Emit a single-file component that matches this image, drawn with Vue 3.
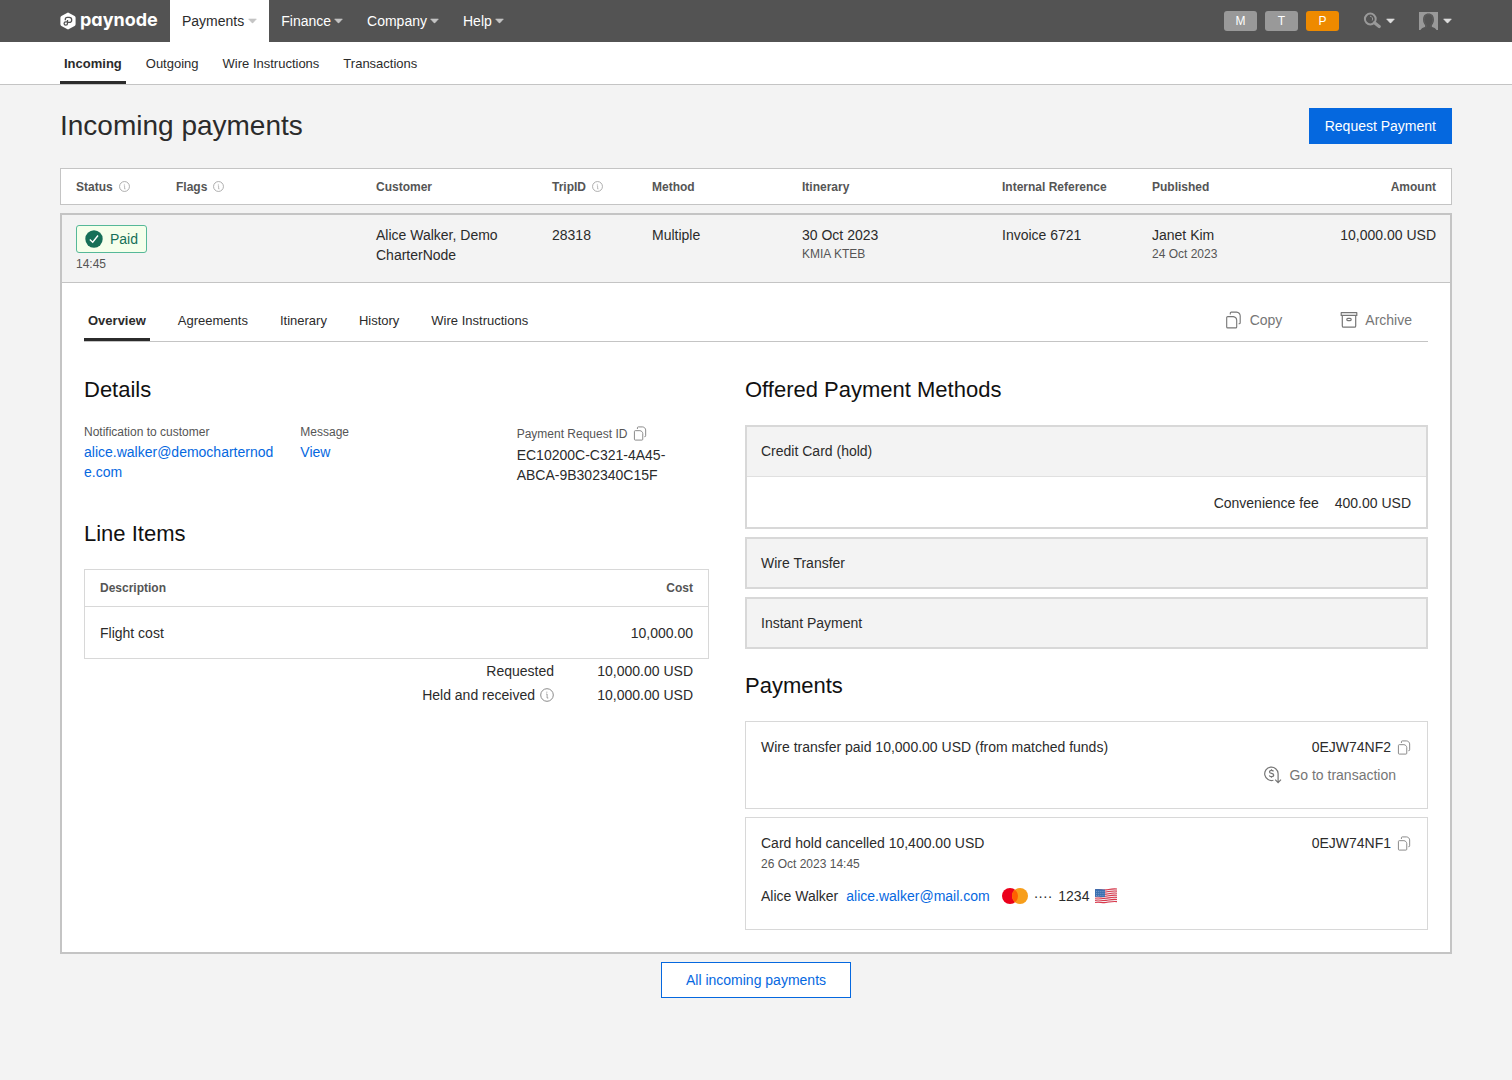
<script setup>
import { h } from 'vue'

const menus = [
  { label: 'Payments', active: true },
  { label: 'Finance' },
  { label: 'Company' },
  { label: 'Help' },
]
const environments = [
  { label: 'M' },
  { label: 'T' },
  { label: 'P', active: true },
]
const sections = ['Incoming', 'Outgoing', 'Wire Instructions', 'Transactions']
const tabs = ['Overview', 'Agreements', 'Itinerary', 'History', 'Wire Instructions']
const columns = [
  { label: 'Status', key: 'status', info: true },
  { label: 'Flags', key: 'flags', info: true },
  { label: 'Customer', key: 'customer' },
  { label: 'TripID', key: 'trip', info: true },
  { label: 'Method', key: 'method' },
  { label: 'Itinerary', key: 'itinerary' },
  { label: 'Internal Reference', key: 'reference' },
  { label: 'Published', key: 'published' },
  { label: 'Amount', key: 'amount' },
]
const methods = [
  { label: 'Credit Card (hold)', fee: '400.00 USD' },
  { label: 'Wire Transfer' },
  { label: 'Instant Payment' },
]
const flagStripes = [0, 1, 2, 3, 4, 5, 6]

const CaretIcon = () =>
  h('svg', { width: 9, height: 6, viewBox: '0 0 9 6', 'aria-hidden': 'true' }, [
    h('path', { d: 'M.6 1h7.8L4.8 4.9h-.6z', fill: 'currentColor', stroke: 'currentColor', 'stroke-width': '.6', 'stroke-linejoin': 'round' }),
  ])

const InfoIcon = (props) =>
  h('svg', { width: props.size, height: props.size, viewBox: '0 0 14 14', fill: 'none', stroke: 'currentColor', 'aria-hidden': 'true' }, [
    h('circle', { cx: 7, cy: 7, r: 6.3, 'stroke-width': '1' }),
    h('path', { d: 'M6.2 6h.9v4M7 10h1.300M6.8 3.7v1', 'stroke-width': '.8' }),
  ])
InfoIcon.props = ['size']

const CopyIcon = (props) =>
  h('svg', { width: props.size, height: props.size, viewBox: '0 0 18 18', fill: 'none', stroke: 'currentColor', 'stroke-width': '1.100', 'stroke-linejoin': 'round', 'aria-hidden': 'true' }, [
    h('path', { d: 'M2.700 5.600h5.600c1.900.2 3.200 1.500 3.400 3.400v6.900a1 1 0 0 1-1 1h-8a1 1 0 0 1-1-1V6.600a1 1 0 0 1 1-1z' }),
    h('path', { d: 'M5.300 3.600V2.100a1 1 0 0 1 1-1h5.200c2 .2 3.500 1.600 3.700 3.600v7.100a1 1 0 0 1-1 1h-.6' }),
  ])
CopyIcon.props = ['size']
</script>

<template>
  <div class="page">
    <header class="topbar">
      <a class="brand" href="#">
        <svg width="16" height="18" viewBox="0 0 16 18" aria-hidden="true">
          <path d="M7 .9a2 2 0 0 1 2 0l5.600 3.200a2 2 0 0 1 1 1.700v6.400a2 2 0 0 1-1 1.700L9 17.100a2 2 0 0 1-2 0l-5.600-3.200a2 2 0 0 1-1-1.700V5.800a2 2 0 0 1 1-1.700z" fill="#fff" />
          <path d="M5.300 8.200V7.400a2 2 0 0 1 2-2h1.900a2.500 2.500 0 0 1 0 5H7.500v1.100a1.700 1.700 0 1 1-1.700-1.700h1.700V8" fill="none" stroke="#535353" stroke-width="1.300" />
        </svg>
        <span class="brand-name">paynode</span>
      </a>
      <nav class="menus" aria-label="Main">
        <button v-for="menu in menus" :key="menu.label" type="button" class="menu" :class="{ active: menu.active }">
          {{ menu.label }}
          <CaretIcon />
        </button>
      </nav>
      <div class="tools">
        <div class="environments">
          <button v-for="env in environments" :key="env.label" type="button" class="environment" :class="{ active: env.active }">{{ env.label }}</button>
        </div>
        <button type="button" class="tool" aria-label="Search">
          <svg width="18" height="18" viewBox="0 0 18 18" fill="none" stroke="#999" aria-hidden="true">
            <circle cx="7.300" cy="7" r="5.400" stroke-width="2" />
            <path d="M11.500 10.800l4.700 3.700" stroke-width="3.200" stroke-linecap="round" />
            <path d="M7 4.200a2.800 2.800 0 0 1 2.200 4.300" stroke-width="1" />
          </svg>
          <CaretIcon />
        </button>
        <button type="button" class="tool" aria-label="Account">
          <svg width="19" height="18" viewBox="0 0 19 18" aria-hidden="true">
            <path d="M0 0h19v18h-1.500c-.7-1.800-2.700-2.200-4.400-3-.6-.4-.4-1.500.1-2.200 1-1.200 1.700-3 1.700-5.300 0-3.700-1.900-6-5.400-6s-5.400 2.300-5.400 6c0 2.300.7 4.100 1.700 5.300.5.700.7 1.800.1 2.200-1.700.8-3.700 1.200-4.400 3H0z" fill="#999" />
            <path d="M9.500 2.500c-2.900 0-4.300 1.900-4.300 5 0 2.200.7 3.700 1.700 4.900.6.900.5 2.600 0 3.100M9.500 2.500c2.900 0 4.300 1.900 4.300 5 0 2.200-.7 3.700-1.700 4.900-.6.900-.5 2.600 0 3.100" fill="none" stroke="#606060" stroke-width=".8" />
          </svg>
          <CaretIcon />
        </button>
      </div>
    </header>

    <nav class="subnav" aria-label="Payments">
      <a v-for="(section, i) in sections" :key="section" href="#" class="tab" :class="{ active: i === 0 }">{{ section }}</a>
    </nav>

    <main class="content">
      <div class="title-row">
        <h1>Incoming payments</h1>
        <button type="button" class="primary">Request Payment</button>
      </div>

      <table class="payments">
        <colgroup>
          <col v-for="col in columns" :key="col.key" :class="`col-${col.key}`" />
        </colgroup>
        <thead>
          <tr>
            <th v-for="col in columns" :key="col.key" scope="col">
              <span class="with-icon">{{ col.label }}<InfoIcon v-if="col.info" :size="11" /></span>
            </th>
          </tr>
        </thead>
        <tbody>
          <tr class="summary">
            <td>
              <span class="badge">
                <svg width="18" height="18" viewBox="0 0 18 18" aria-hidden="true">
                  <circle cx="9" cy="9" r="8.700" fill="#166f58" />
                  <path d="M4.800 9.600l2.900 2.600 5.300-6.700" fill="none" stroke="#fff" stroke-width="1.400" />
                </svg>
                Paid
              </span>
              <div class="sub time">14:45</div>
            </td>
            <td></td>
            <td>Alice Walker, Demo CharterNode</td>
            <td>28318</td>
            <td>Multiple</td>
            <td>30 Oct 2023<div class="sub">KMIA KTEB</div></td>
            <td>Invoice 6721</td>
            <td>Janet Kim<div class="sub">24 Oct 2023</div></td>
            <td>10,000.00 USD</td>
          </tr>
          <tr>
            <td class="panel" :colspan="columns.length">
              <div class="tabbar">
                <nav class="tabs" aria-label="Payment">
                  <a v-for="(tab, i) in tabs" :key="tab" href="#" class="tab" :class="{ active: i === 0 }">{{ tab }}</a>
                </nav>
                <div class="actions">
                  <button type="button" class="ghost"><CopyIcon :size="18" />Copy</button>
                  <button type="button" class="ghost">
                    <svg width="18" height="18" viewBox="0 0 18 18" fill="none" stroke="currentColor" stroke-width="1.200" stroke-linejoin="round" aria-hidden="true">
                      <path d="M1.200 1.700h15.600v2.700H1.200z" />
                      <path d="M2.300 4.500v10.400a1.300 1.300 0 0 0 1.300 1.300h10.800a1.300 1.300 0 0 0 1.300-1.300V4.500" />
                      <rect x="6.800" y="7.400" width="4.400" height="2.200" rx="1" />
                    </svg>
                    Archive
                  </button>
                </div>
              </div>

              <div class="columns">
                <div>
                  <h2>Details</h2>
                  <dl class="details">
                    <div>
                      <dt>Notification to customer</dt>
                      <dd><a href="#">alice.walker@democharternode.com</a></dd>
                    </div>
                    <div>
                      <dt>Message</dt>
                      <dd><a href="#">View</a></dd>
                    </div>
                    <div>
                      <dt class="with-copy">
                        Payment Request ID
                        <button type="button" class="copy" aria-label="Copy payment request ID"><CopyIcon :size="15" /></button>
                      </dt>
                      <dd>EC10200C-C321-4A45-ABCA-9B302340C15F</dd>
                    </div>
                  </dl>

                  <h2 class="items-title">Line Items</h2>
                  <table class="items">
                    <thead>
                      <tr><th scope="col">Description</th><th scope="col">Cost</th></tr>
                    </thead>
                    <tbody>
                      <tr><td>Flight cost</td><td>10,000.00</td></tr>
                    </tbody>
                  </table>
                  <dl class="totals">
                    <dt>Requested</dt>
                    <dd>10,000.00 USD</dd>
                    <dt>Held and received<InfoIcon :size="14" /></dt>
                    <dd>10,000.00 USD</dd>
                  </dl>
                </div>

                <div>
                  <h2>Offered Payment Methods</h2>
                  <ul class="stack">
                    <li v-for="method in methods" :key="method.label" class="method" :class="{ open: method.fee }">
                      <div class="method-name">{{ method.label }}</div>
                      <div v-if="method.fee" class="fee"><span>Convenience fee</span><span>{{ method.fee }}</span></div>
                    </li>
                  </ul>

                  <h2 class="payments-title">Payments</h2>
                  <ul class="stack">
                    <li class="payment">
                      <div class="payment-row">
                        <span>Wire transfer paid 10,000.00 USD (from matched funds)</span>
                        <span class="code">0EJW74NF2<button type="button" class="copy" aria-label="Copy 0EJW74NF2"><CopyIcon :size="15" /></button></span>
                      </div>
                      <button type="button" class="ghost transaction">
                        <svg width="18" height="18" viewBox="0 0 18 18" fill="none" stroke="currentColor" stroke-width="1.200" aria-hidden="true">
                          <path d="M9.400 14.200a6.700 6.700 0 1 1 4.700-6.700v8.800M11.200 13.700l2.900 2.900 2.900-2.900" />
                          <path d="M9.500 5.400c-.4-.7-1-1-2-1-1.200 0-2 .6-2 1.500 0 2.100 4.200.9 4.200 3.100 0 1-.9 1.600-2.100 1.600-1.100 0-1.900-.4-2.300-1.200M7.500 3.300v1.100M7.500 10.600v1.200" />
                        </svg>
                        Go to transaction
                      </button>
                    </li>
                    <li class="payment">
                      <div class="payment-row">
                        <span>Card hold cancelled 10,400.00 USD</span>
                        <span class="code">0EJW74NF1<button type="button" class="copy" aria-label="Copy 0EJW74NF1"><CopyIcon :size="15" /></button></span>
                      </div>
                      <div class="sub">26 Oct 2023 14:45</div>
                      <div class="payer">
                        <span>Alice Walker</span>
                        <a href="#">alice.walker@mail.com</a>
                        <span class="card">
                          <svg width="26" height="16" viewBox="0 0 26 16" role="img" aria-label="Mastercard">
                            <circle cx="8" cy="8" r="8" fill="#eb001b" />
                            <circle cx="18" cy="8" r="8" fill="#f79e1b" />
                            <path d="M13 1.750a8 8 0 0 1 0 12.500a8 8 0 0 1 0-12.500z" fill="#ff5f00" />
                          </svg>
                          <span>····</span>
                          <span>1234</span>
                          <svg width="22" height="16" viewBox="0 0 22 16" role="img" aria-label="United States">
                            <path d="M0 1.300c4-1.200 7 .6 11 0s7-1.500 11-.9v13.800c-4-.6-7 .3-11 .9s-7-1.200-11 0z" fill="#f3eef0" />
                            <path
                              v-for="i in flagStripes"
                              :key="i"
                              :d="`M0 ${1.9 + i * 2.1}c4-1.200 7 .6 11 0s7-1.500 11-.9`"
                              fill="none"
                              stroke="#d8394c"
                              stroke-width="1.100"
                            />
                            <path d="M0 1.300c3.500-1 6.500.4 10 .1v7.500c-3.500.3-6.500-.8-10 .1z" fill="#3a6fb0" />
                            <path d="M1 3.400h8.500M1 5.400h8.500M1 7.400h8.500" stroke="#a9c0df" stroke-width=".7" stroke-dasharray=".8 1.100" />
                          </svg>
                        </span>
                      </div>
                    </li>
                  </ul>
                </div>
              </div>
            </td>
          </tr>
        </tbody>
      </table>

      <div class="footer">
        <button type="button" class="outline">All incoming payments</button>
      </div>
    </main>
  </div>
</template>

<style>
body {
  margin: 0;
  background: #f3f3f3;
}
</style>

<style scoped>
.page {
  font: 14px/20px "Liberation Sans", Arial, sans-serif;
  color: #2b2b2b;
}

.page * {
  box-sizing: border-box;
}

button {
  margin: 0;
  padding: 0;
  border: 0;
  background: none;
  color: inherit;
  font: inherit;
  cursor: pointer;
}

a {
  color: #0568df;
  text-decoration: none;
}

svg {
  display: block;
  flex: none;
}

h1,
h2,
dl,
dd,
ul {
  margin: 0;
  padding: 0;
  font-weight: 400;
}

ul {
  list-style: none;
}

/* Top bar */
.topbar {
  display: flex;
  height: 42px;
  padding: 0 60px;
  background: #535353;
  color: #fff;
}

.brand {
  display: flex;
  align-items: center;
  gap: 4px;
  width: 110px;
  color: #fff;
}

.brand-name {
  padding-bottom: 2px;
  font: 700 18px/36px Inter, sans-serif;
  font-feature-settings: "cv11";
}

.menus {
  display: flex;
}

.menu {
  display: flex;
  align-items: center;
  gap: 3px;
  padding: 0 12px;
}

.menu svg {
  color: #c4c4c4;
}

.menu.active {
  gap: 4px;
  background: #fff;
  color: #2b2b2b;
}

.tools {
  display: flex;
  align-items: center;
  gap: 24px;
  margin-left: auto;
}

.environments {
  display: flex;
  gap: 8px;
}

.environment {
  width: 33px;
  height: 20px;
  border-radius: 3px;
  background: #999;
  font-size: 12px;
}

.environment.active {
  background: #ee8a00;
}

.tool {
  display: flex;
  align-items: center;
  gap: 5px;
  color: #ddd;
}

/* Tabs */
.subnav,
.tabs {
  display: flex;
  gap: 24px;
}

.subnav {
  gap: 16px;
  padding: 0 60px;
  background: #fff;
  border-bottom: 1px solid #c4c4c4;
}

.tab {
  padding: 2px 4px 0;
  font-size: 13px;
  line-height: 40px;
  color: #2b2b2b;
}

.tab.active {
  font-weight: 700;
  box-shadow: inset 0 -3px #2b2b2b;
}

/* Page */
.content {
  padding: 23px 60px 40px;
}

.title-row {
  display: flex;
  align-items: center;
  justify-content: space-between;
  margin-bottom: 24px;
}

h1 {
  font-size: 28px;
  line-height: 36px;
}

.primary {
  height: 36px;
  padding: 0 16px;
  background: #0568df;
  color: #fff;
}

.outline {
  height: 36px;
  padding: 0 24px;
  border: 1px solid #0568df;
  background: #fff;
  color: #0568df;
}

.footer {
  margin-top: 8px;
  text-align: center;
}

/* Payments table */
.payments {
  width: 100%;
  border-spacing: 0;
  table-layout: fixed;
}

.col-status,
.col-trip {
  width: 100px;
}

.col-flags,
.col-itinerary {
  width: 200px;
}

.col-method,
.col-reference,
.col-published {
  width: 150px;
}

.col-amount {
  width: 166px;
}

th {
  font-size: 12px;
  line-height: 20px;
  font-weight: 700;
  text-align: left;
  color: #555;
}

.payments > thead th {
  height: 37px;
  padding: 0 0 0 16px;
  background: #fff;
  border: solid #c4c4c4;
  border-width: 1px 0;
}

.payments > thead th:first-child {
  padding-left: 15px;
  border-left-width: 1px;
}

.payments > thead th:last-child {
  padding-right: 15px;
  border-right-width: 1px;
  text-align: right;
}

.payments > tbody::before {
  content: "";
  display: block;
  height: 8px;
}

.with-icon {
  display: inline-flex;
  align-items: center;
  gap: 6px;
}

.with-icon svg {
  color: #999;
}

.summary td {
  padding: 10px 16px 9px;
  border: solid #c4c4c4;
  border-width: 2px 0 1px;
  vertical-align: top;
}

.summary td:first-child {
  padding: 10px 0 9px 14px;
  border-left-width: 2px;
}

.summary td:last-child {
  padding-right: 14px;
  border-right-width: 2px;
  text-align: right;
}

.sub {
  font-size: 12px;
  line-height: 18px;
  color: #555;
}

.time {
  margin-top: 2px;
}

.badge {
  display: flex;
  align-items: center;
  gap: 7px;
  width: max-content;
  height: 28px;
  padding: 0 8px;
  border: 1px solid #55b898;
  border-radius: 3px;
  background: #f5ffeb;
  color: #166f58;
}

/* Expanded panel */
.panel {
  padding: 16px 22px 22px;
  border: solid #c4c4c4;
  border-width: 0 2px 2px;
  background: #fff;
}

.tabbar {
  display: flex;
  justify-content: space-between;
  border-bottom: 1px solid #c4c4c4;
}

.actions {
  display: flex;
  gap: 58px;
  padding-right: 16px;
}

.ghost {
  display: flex;
  align-items: center;
  gap: 7px;
  color: #767676;
}

.columns {
  display: grid;
  grid-template-columns: minmax(0, 625fr) minmax(0, 683fr);
  gap: 36px;
  padding-top: 34px;
}

h2 {
  margin-bottom: 21px;
  font-size: 22px;
  line-height: 28px;
  color: #111;
}

.details {
  display: grid;
  grid-template-columns: repeat(3, minmax(0, 1fr));
  gap: 24px;
}

.details dt {
  margin-bottom: 3px;
  font-size: 12px;
  line-height: 14px;
  color: #555;
}

.details dd {
  padding-right: 2px;
  overflow-wrap: anywhere;
}

.details .with-copy {
  display: flex;
  align-items: center;
  gap: 6px;
  height: 17px;
}

.copy {
  color: #808080;
}

.items-title {
  margin-top: 35px;
}

.items {
  width: 100%;
  border: 1px solid #d8d8d8;
  border-spacing: 0;
}

.items th,
.items td {
  padding: 8px 15px;
}

.items td {
  height: 52px;
  border-top: 1px solid #d8d8d8;
}

.items th:last-child,
.items td:last-child {
  text-align: right;
}

.totals {
  display: grid;
  grid-template-columns: 1fr 139px;
  padding-right: 16px;
  line-height: 24px;
  text-align: right;
}

.totals dt {
  display: flex;
  align-items: center;
  justify-content: flex-end;
  gap: 5px;
}

.totals svg {
  color: #8a8a8a;
}

.stack {
  display: grid;
  gap: 8px;
}

.method {
  border: 2px solid #d8d8d8;
}

.method-name {
  padding: 14px;
  background: #f3f3f3;
}

.open .method-name {
  padding-bottom: 15px;
  border-bottom: 1px solid #e0e0e0;
}

.fee {
  display: flex;
  justify-content: flex-end;
  gap: 16px;
  padding: 16px 15px 14px;
}

.payments-title {
  margin-top: 23px;
}

.payment {
  padding: 15px 15px 23px;
  border: 1px solid #d8d8d8;
}

.payment-row {
  display: flex;
  justify-content: space-between;
}

.code {
  display: flex;
  align-items: center;
  gap: 6px;
}

.transaction {
  margin: 8px 16px 0 auto;
}

.payment .sub {
  margin-top: 1px;
  line-height: 20px;
}

.payer {
  display: flex;
  align-items: center;
  gap: 8px;
  margin-top: 12px;
}

.card {
  display: flex;
  align-items: center;
  gap: 6px;
  margin-left: 4px;
}
</style>
